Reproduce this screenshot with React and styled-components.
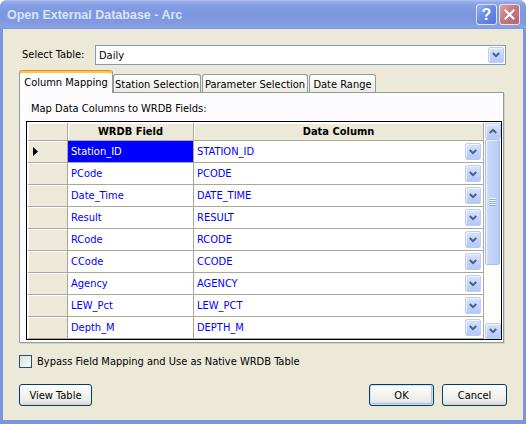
import React from 'react';
import styled, { createGlobalStyle } from 'styled-components';

const GlobalStyle = createGlobalStyle`
  html, body { margin: 0; padding: 0; background: #ffffff; }
  body {
    font-family: "DejaVu Sans Condensed", "Liberation Sans", sans-serif;
    font-size: 11px;
    color: #000;
  }
  * { box-sizing: border-box; }
`;

const Window = styled.div`
  width: 526px;
  height: 424px;
  display: flex;
  flex-direction: column;
  background: #7b95df;
  border-radius: 7px 7px 0 0;
  overflow: hidden;
`;

const TitleBar = styled.div`
  height: 29px;
  flex: none;
  display: flex;
  align-items: center;
  padding: 0 6px 0 7px;
  background: linear-gradient(
    to bottom,
    #b2c3f1 0px,
    #95abe9 2px,
    #859ee4 5px,
    #7c97e0 14px,
    #819be2 24px,
    #8ba4e5 27px,
    #7b95df 29px
  );
`;

const Title = styled.div`
  flex: 1;
  font-family: "Liberation Sans", "DejaVu Sans", sans-serif;
  font-weight: bold;
  font-size: 12.5px;
  color: #d8e4f8;
  padding-top: 1px;
`;

const TitleButton = styled.div`
  width: 21px;
  height: 21px;
  margin-left: 2px;
  border-radius: 3px;
  border: 1px solid rgba(255, 255, 255, 0.75);
  display: flex;
  align-items: center;
  justify-content: center;
  color: #ffffff;
  font-family: "Liberation Sans", sans-serif;
  font-weight: bold;
  font-size: 16px;
  background: ${p => p.$close
    ? 'linear-gradient(135deg, #d9a3ab 0%, #c27b86 45%, #b4646f 100%)'
    : 'linear-gradient(135deg, #9ab3f2 0%, #6a8ce6 45%, #5374dc 100%)'};
`;

const Body = styled.div`
  flex: 1;
  margin: 0 3px 4px 3px;
  background: #ece9d8;
  padding: 16px 16px 0 16px;
  display: flex;
  flex-direction: column;
`;

const SelectRow = styled.div`
  display: flex;
  align-items: center;
  height: 20px;
`;

const FieldLabel = styled.div`
  width: 76px;
  padding-left: 3px;
  padding-bottom: 1px;
`;

const Combo = styled.div`
  flex: 1;
  height: 20px;
  margin-right: 1px;
  border: 1px solid #7f9db9;
  background: #ffffff;
  display: flex;
  align-items: center;
  padding: 0 1px 0 3px;
`;

const ComboText = styled.div`
  flex: 1;
  padding-top: 1px;
`;

const DropButton = styled.div`
  width: 16px;
  height: ${p => p.$h || 16}px;
  flex: none;
  display: flex;
  align-items: center;
  justify-content: center;
  border: 1px solid #bccdf6;
  border-radius: 2px;
  background: linear-gradient(to bottom, #d9e5fd 0%, #c3d4fb 50%, #b4c8f7 100%);
  box-shadow: inset 1px 1px 0 rgba(255, 255, 255, 0.6);
`;

const TabStrip = styled.div`
  margin-top: 5px;
  height: 22px;
  display: flex;
  align-items: flex-end;
  position: relative;
  z-index: 1;
`;

const Tab = styled.div`
  width: ${p => p.$w}px;
  margin-left: ${p => p.$gap || 0}px;
  height: ${p => (p.$active ? 23 : 18)}px;
  margin-bottom: ${p => (p.$active ? -1 : 0)}px;
  border: 1px solid #919b9c;
  border-bottom: none;
  border-radius: 3px 3px 0 0;
  display: flex;
  align-items: center;
  justify-content: center;
  white-space: nowrap;
  padding-top: ${p => (p.$active ? 0 : 1)}px;
  ${p => p.$active
    ? `
    background: #fcfcfe;
    border-top: 1px solid #e68b2c;
    box-shadow: inset 0 2px 0 #ffc73c;
  `
    : `
    background: linear-gradient(to bottom, #ffffff 0%, #f6f5f1 60%, #ebe9e1 100%);
  `}
`;

const Panel = styled.div`
  margin-right: 3px;
  border: 1px solid #919b9c;
  background: #fcfcfe;
  padding: 9px 1px 2px 6px;
  box-shadow: 1px 1px 0 #d6d3c4;
`;

const PanelLabel = styled.div`
  height: 13px;
  line-height: 13px;
  padding-left: 5px;
`;

const GridFrame = styled.div`
  margin-top: 6px;
  border: 1px solid #000000;
  background: #ffffff;
  padding: 1px 1px 0 1px;
  display: flex;
  gap: 1px;
`;

const Table = styled.div`
  width: 456px;
  display: grid;
  grid-template-columns: 40px 126px 290px;
  grid-template-rows: 18px repeat(9, 22px);
`;

const HeadCell = styled.div`
  background: #ece9d8;
  border-right: 1px solid #aca899;
  border-bottom: 1px solid #aca899;
  box-shadow: inset 1px 1px 0 #ffffff;
  display: flex;
  align-items: center;
  justify-content: center;
  font-weight: bold;
`;

const RowHead = styled.div`
  background: #ece9d8;
  border-right: 1px solid #aca899;
  border-bottom: 1px solid #aca899;
  box-shadow: inset 1px 1px 0 #ffffff;
  display: flex;
  align-items: center;
  padding-left: 5px;
`;

const Cell = styled.div`
  background: ${p => (p.$selected ? '#0000ff' : '#ffffff')};
  color: ${p => (p.$selected ? '#ffffff' : '#0000ff')};
  border-right: 1px solid #aca899;
  border-bottom: 1px solid #aca899;
  display: flex;
  align-items: center;
  padding: 0 2px 0 3px;
  white-space: nowrap;
`;

const CellText = styled.div`
  flex: 1;
`;

const Scrollbar = styled.div`
  width: 15px;
  display: flex;
  flex-direction: column;
  background: #fdfdfa;
`;

const Thumb = styled.div`
  height: ${p => p.$h}px;
  border: 1px solid #a9bff3;
  border-radius: 2px;
  background: linear-gradient(to right, #cfdcfd 0%, #c2d3fb 50%, #b8cbf7 100%);
  box-shadow: inset 1px 1px 0 rgba(255, 255, 255, 0.7);
  display: flex;
  align-items: center;
  justify-content: center;
`;

const Grip = styled.div`
  width: 7px;
  height: 8px;
  background: repeating-linear-gradient(to bottom, #eef4fe 0 1px, #8cb0f8 1px 2px);
`;

const Track = styled.div`
  flex: 1;
`;

const CheckRow = styled.div`
  margin-top: 12px;
  height: 13px;
  display: flex;
  align-items: center;
  gap: 5px;
`;

const CheckBox = styled.div`
  width: 13px;
  height: 13px;
  border: 1px solid #1c5180;
  background: linear-gradient(135deg, #dcdcd7 0%, #f0f0ec 60%, #ffffff 100%);
`;

const ButtonRow = styled.div`
  margin-top: 16px;
  display: flex;
  align-items: center;
`;

const Spacer = styled.div`
  flex: 1;
`;

const Button = styled.div`
  width: ${p => p.$w}px;
  height: 22px;
  margin-left: ${p => p.$gap || 0}px;
  border: 1px solid #003c74;
  border-radius: 3px;
  background: linear-gradient(to bottom, #ffffff 0%, #f5f5f1 40%, #ecebe5 80%, #d9d5cb 100%);
  display: flex;
  align-items: center;
  justify-content: center;
  ${p => (p.$default ? 'box-shadow: inset 0 0 0 1px #cde0fa, inset -1px -1px 0 1px #a9c2ec;' : '')}
`;

const Chevron = ({ up }) => (
  <svg width="8" height="6" viewBox="0 0 8 6">
    <polyline
      points={up ? '0.8,5 4,1.8 7.2,5' : '0.8,1 4,4.2 7.2,1'}
      fill="none"
      stroke="#4d6185"
      strokeWidth="2"
    />
  </svg>
);

const Pointer = () => (
  <svg width="5" height="9" viewBox="0 0 5 9">
    <polygon points="0,0 5,4.5 0,9" fill="#000" />
  </svg>
);

const CloseGlyph = () => (
  <svg width="11" height="11" viewBox="0 0 11 11">
    <path d="M1.5 1.5 L9.5 9.5 M9.5 1.5 L1.5 9.5" stroke="#fff" strokeWidth="2" strokeLinecap="square" />
  </svg>
);

const rows = [
  ['Station_ID', 'STATION_ID'],
  ['PCode', 'PCODE'],
  ['Date_Time', 'DATE_TIME'],
  ['Result', 'RESULT'],
  ['RCode', 'RCODE'],
  ['CCode', 'CCODE'],
  ['Agency', 'AGENCY'],
  ['LEW_Pct', 'LEW_PCT'],
  ['Depth_M', 'DEPTH_M'],
];

const tabs = [
  { label: 'Column Mapping', w: 94, active: true },
  { label: 'Station Selection', w: 88, gap: 0 },
  { label: 'Parameter Selection', w: 106, gap: 1 },
  { label: 'Date Range', w: 67, gap: 1 },
];

export default function App() {
  return (
    <>
      <GlobalStyle />
      <Window>
        <TitleBar>
          <Title>Open External Database - Arc</Title>
          <TitleButton>?</TitleButton>
          <TitleButton $close>
            <CloseGlyph />
          </TitleButton>
        </TitleBar>
        <Body>
          <SelectRow>
            <FieldLabel>Select Table:</FieldLabel>
            <Combo>
              <ComboText>Daily</ComboText>
              <DropButton $h={16}>
                <Chevron />
              </DropButton>
            </Combo>
          </SelectRow>

          <TabStrip>
            {tabs.map(t => (
              <Tab key={t.label} $w={t.w} $gap={t.gap} $active={t.active}>
                {t.label}
              </Tab>
            ))}
          </TabStrip>

          <Panel>
            <PanelLabel>Map Data Columns to WRDB Fields:</PanelLabel>
            <GridFrame>
              <Table>
                <HeadCell />
                <HeadCell>WRDB Field</HeadCell>
                <HeadCell>Data Column</HeadCell>
                {rows.map(([field, col], i) => (
                  <React.Fragment key={field}>
                    <RowHead>{i === 0 && <Pointer />}</RowHead>
                    <Cell $selected={i === 0}>
                      <CellText>{field}</CellText>
                    </Cell>
                    <Cell>
                      <CellText>{col}</CellText>
                      <DropButton $h={17}>
                        <Chevron />
                      </DropButton>
                    </Cell>
                  </React.Fragment>
                ))}
              </Table>
              <Scrollbar>
                <DropButton $h={16}>
                  <Chevron up />
                </DropButton>
                <Thumb $h={126}>
                  <Grip />
                </Thumb>
                <Track />
                <DropButton $h={16}>
                  <Chevron />
                </DropButton>
              </Scrollbar>
            </GridFrame>
          </Panel>

          <CheckRow>
            <CheckBox />
            <span>Bypass Field Mapping and Use as Native WRDB Table</span>
          </CheckRow>

          <ButtonRow>
            <Button $w={73}>View Table</Button>
            <Spacer />
            <Button $w={65} $default>OK</Button>
            <Button $w={65} $gap={8}>Cancel</Button>
          </ButtonRow>
        </Body>
      </Window>
    </>
  );
}
